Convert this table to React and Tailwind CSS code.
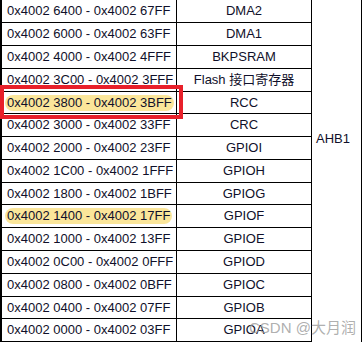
import React from "react";

const rows = [
  { addr: "0x4002 6400 - 0x4002 67FF", name: "DMA2", h: "h-[23px]" },
  { addr: "0x4002 6000 - 0x4002 63FF", name: "DMA1", h: "h-[23px]" },
  { addr: "0x4002 4000 - 0x4002 4FFF", name: "BKPSRAM", h: "h-[23px]" },
  { addr: "0x4002 3C00 - 0x4002 3FFF", name: "Flash 接口寄存器", h: "h-[23px]" },
  { addr: "0x4002 3800 - 0x4002 3BFF", name: "RCC", h: "h-[22px]", mark: true },
  { addr: "0x4002 3000 - 0x4002 33FF", name: "CRC", h: "h-[23px]" },
  { addr: "0x4002 2000 - 0x4002 23FF", name: "GPIOI", h: "h-[23px]" },
  { addr: "0x4002 1C00 - 0x4002 1FFF", name: "GPIOH", h: "h-[23px]" },
  { addr: "0x4002 1800 - 0x4002 1BFF", name: "GPIOG", h: "h-[22px]" },
  { addr: "0x4002 1400 - 0x4002 17FF", name: "GPIOF", h: "h-[23px]", mark: true },
  { addr: "0x4002 1000 - 0x4002 13FF", name: "GPIOE", h: "h-[23px]" },
  { addr: "0x4002 0C00 - 0x4002 0FFF", name: "GPIOD", h: "h-[23px]" },
  { addr: "0x4002 0800 - 0x4002 0BFF", name: "GPIOC", h: "h-[23px]" },
  { addr: "0x4002 0400 - 0x4002 07FF", name: "GPIOB", h: "h-[22px]" },
  { addr: "0x4002 0000 - 0x4002 03FF", name: "GPIOA", h: "h-[23px]" },
];

const App = () => {
  return (
    <div
      className="relative w-[362px] h-[344px] bg-white overflow-hidden text-[13px] text-[#10102a]"
      style={{ fontFamily: '"Liberation Sans", Arial, "Noto Sans CJK SC", sans-serif' }}
    >
      <div className="flex">
        <div className="flex flex-col w-[312px] border-l-2 border-black">
          {rows.map((r) => (
            <div key={r.addr} className={`flex ${r.h} border-b border-black`}>
              <div className="w-[175px] border-r border-black flex items-center pl-[3px]">
                <span
                  className={
                    r.mark
                      ? "bg-[#fbe69a] rounded-full px-[2px] leading-[16px] whitespace-nowrap"
                      : "px-[2px] leading-[16px] whitespace-nowrap"
                  }
                >
                  {r.addr}
                </span>
              </div>
              <div className="w-[135px] border-r border-black flex items-center justify-center">
                {r.name}
              </div>
            </div>
          ))}
        </div>
        <div className="w-[50px] h-[342px] border-r border-black pl-[4px] pt-[129px]">
          AHB1
        </div>
      </div>

      {/* red highlight box */}
      <div className="absolute left-0 top-[85px] w-[183px] h-[34px] border-4 border-[#e8202a]" />

      <div className="absolute left-[249px] top-[317px] text-[15px] text-[#9a9a9a]/80">
        CSDN @大月润
      </div>
    </div>
  );
};

export default App;
